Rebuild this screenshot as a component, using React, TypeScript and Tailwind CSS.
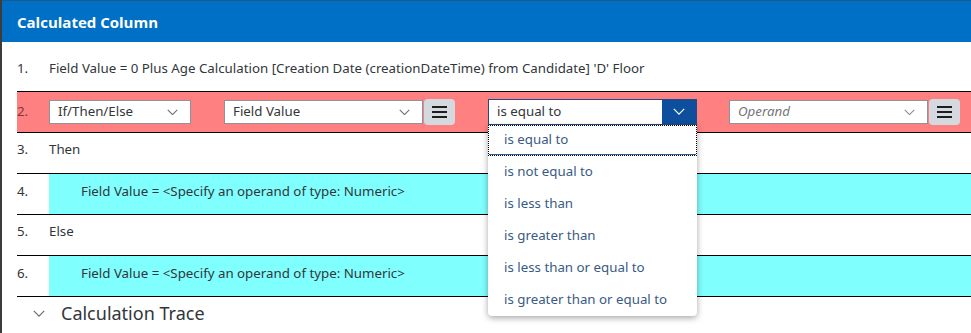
import React from "react";

const font = { fontFamily: '"Noto Sans", "Open Sans", Arial, sans-serif' };

function Chevron({ className = "", color = "#6a6d70", w = 12 }: { className?: string; color?: string; w?: number }) {
  return (
    <svg width={w} height={w * 0.6} viewBox="0 0 12 7" className={className} fill="none">
      <path d="M0.8 0.8 L6 6 L11.2 0.8" stroke={color} strokeWidth="1.2" />
    </svg>
  );
}

function Menu() {
  return (
    <div className="flex h-[26px] w-[31px] items-center justify-center rounded-[4px] bg-[#d3d9de]">
      <svg width="15" height="12" viewBox="0 0 15 12">
        <rect x="0" y="0" width="15" height="2" fill="#1d1d1d" />
        <rect x="0" y="5" width="15" height="2" fill="#1d1d1d" />
        <rect x="0" y="10" width="15" height="2" fill="#1d1d1d" />
      </svg>
    </div>
  );
}

function Select({ w, label, italic = false }: { w: number; label: string; italic?: boolean }) {
  return (
    <div
      className="flex h-[24px] items-center justify-between border border-[#8d9399] bg-white pl-[8px] pr-[12px]"
      style={{ width: w }}
    >
      <span className={italic ? "text-[13.3px] italic text-[#74777a]" : "text-[13.3px] text-[#32363a]"}>{label}</span>
      <Chevron w={11} color={italic ? "#8a8d90" : "#6a6d70"} />
    </div>
  );
}

const options = [
  "is equal to",
  "is not equal to",
  "is less than",
  "is greater than",
  "is less than or equal to",
  "is greater than or equal to",
];

export default function App() {
  return (
    <div className="relative h-[333px] w-[971px] overflow-hidden border-l-2 border-[#3c3c3c] bg-white" style={font}>
      <div className="flex h-[42px] items-center border-t border-[#1d5a8c] bg-[#0070c6] pl-[15px] pt-[2px]">
        <span className="text-[15px] font-bold text-white" style={{ fontFamily: '"Open Sans", "Noto Sans", sans-serif' }}>
          Calculated Column
        </span>
      </div>
      <div className="pl-[15px] pt-[8px]">
        {/* Row 1 */}
        <div className="flex h-[42px] items-center border-b border-black pb-[4px] text-[13.3px] text-[#32363a]">
          <span className="w-[32px]">1.</span>
          <span>Field Value = 0 Plus Age Calculation [Creation Date (creationDateTime) from Candidate] 'D' Floor</span>
        </div>
        {/* Row 2 */}
        <div className="flex h-[41px] items-center border-b border-black bg-[#ff8080] text-[13.3px]">
          <span className="w-[32px] text-[#7a3b3b]">2.</span>
          <Select w={142} label="If/Then/Else" />
          <div className="ml-[33px] flex items-center gap-[1px]">
            <Select w={199} label="Field Value" />
            <Menu />
          </div>
          <div className="relative ml-[33px]">
            <div className="flex h-[26px] w-[209px] items-stretch border border-[#1f4c86] bg-white">
              <span className="flex flex-1 items-center pl-[8px] text-[13.3px] text-[#32363a]">is equal to</span>
              <span className="flex w-[34px] items-center justify-center bg-[#0d4f9c]">
                <Chevron w={12} color="#ffffff" />
              </span>
            </div>
            <div className="absolute left-0 top-[26px] z-10 w-[209px] rounded-b-[4px] bg-white shadow-[0_2px_6px_rgba(0,0,0,0.35)]">
              {options.map((o, i) => (
                <div
                  key={o}
                  className={
                    i === 0
                      ? "flex h-[31px] items-center border border-dotted border-black pb-[2px] pl-[15px] text-[13.3px] text-[#3a5a84] shadow-[inset_0_-1px_0_#2b5d9a]"
                      : "flex h-[32px] items-center pl-[16px] text-[13.3px] text-[#3a5a84]"
                  }
                >
                  {o}
                </div>
              ))}
            </div>
          </div>
          <div className="ml-[32px] flex items-center gap-[1px]">
            <Select w={199} label="Operand" italic />
            <Menu />
          </div>
        </div>
        {/* Row 3 */}
        <div className="flex h-[41px] items-center border-b border-black pb-[7px] text-[13.3px] text-[#32363a]">
          <span className="w-[32px]">3.</span>
          <span>Then</span>
        </div>
        {/* Row 4 */}
        <div className="flex h-[41px] items-stretch border-b border-black text-[13.3px] text-[#32363a]">
          <span className="flex w-[32px] items-center pb-[4px]">4.</span>
          <div className="flex flex-1 items-center bg-[#80ffff] pb-[4px] pl-[32px]">
            Field Value = &lt;Specify an operand of type: Numeric&gt;
          </div>
        </div>
        {/* Row 5 */}
        <div className="flex h-[41px] items-center border-b border-black pb-[7px] text-[13.3px] text-[#32363a]">
          <span className="w-[32px]">5.</span>
          <span>Else</span>
        </div>
        {/* Row 6 */}
        <div className="flex h-[41px] items-stretch border-b border-black text-[13.3px] text-[#32363a]">
          <span className="flex w-[32px] items-center pb-[4px]">6.</span>
          <div className="flex flex-1 items-center bg-[#80ffff] pb-[4px] pl-[32px]">
            Field Value = &lt;Specify an operand of type: Numeric&gt;
          </div>
        </div>
        {/* Calculation Trace */}
        <div className="flex h-[33px] items-center pl-[16px] text-[18px] text-[#32363a]">
          <Chevron w={12} color="#6a6d70" />
          <span className="ml-[16px]">Calculation Trace</span>
        </div>
      </div>
    </div>
  );
}
